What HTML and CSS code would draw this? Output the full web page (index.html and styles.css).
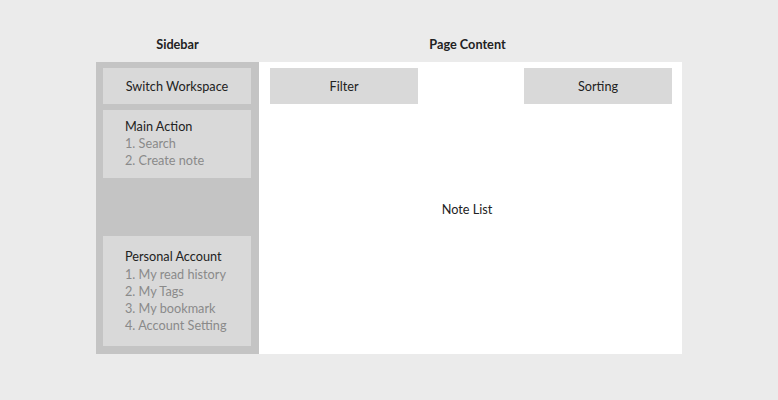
FILE: index.html
```html
<!DOCTYPE html>
<html lang="en">
<head>
  <meta charset="UTF-8">
  <meta name="viewport" content="width=device-width, initial-scale=1.0">
  <title>Note App Layout</title>
  <link rel="stylesheet" href="styles.css">
</head>
<body>
  <div class="layout">
    <div class="col-title">Sidebar</div>
    <div class="col-title col-title-page">Page Content</div>

    <aside class="sidebar">
      <div class="block block-center">Switch Workspace</div>
      <div class="block block-list block-main">
        <div class="block-title">Main Action</div>
        <div class="item">1. Search</div>
        <div class="item">2. Create note</div>
      </div>
      <div class="block block-list block-account">
        <div class="block-title">Personal Account</div>
        <div class="item">1. My read history</div>
        <div class="item">2. My Tags</div>
        <div class="item">3. My bookmark</div>
        <div class="item">4. Account Setting</div>
      </div>
    </aside>

    <main class="content">
      <div class="toolbar">
        <div class="block block-center">Filter</div>
        <div class="block block-center">Sorting</div>
      </div>
      <div class="note-list">Note List</div>
    </main>
  </div>
</body>
</html>
```

FILE: styles.css
```css
body {
  margin: 0;
  padding: 0;
  background-color: #ebebeb;
  font-family: Lato, "Open Sans", sans-serif;
  font-size: 12.7px;
  color: #222;
}

.layout {
  display: grid;
  grid-template-columns: 163px 423px;
  grid-template-rows: 26px 292px;
  margin: 36px 0 0 96px;
}

.col-title {
  text-align: center;
  font-weight: bold;
  line-height: 16px;
}

.col-title-page {
  padding-right: 6px;
}

.sidebar {
  background-color: #c4c4c4;
  display: flex;
  flex-direction: column;
  gap: 6px;
  padding: 6px 8px 8px 7px;
}

.block {
  background-color: #d9d9d9;
}

.block-center {
  height: 36px;
  display: flex;
  align-items: center;
  justify-content: center;
}

.block-list {
  display: flex;
  flex-direction: column;
  justify-content: center;
  padding: 0 0 0 22px;
  line-height: 17px;
  white-space: nowrap;
}

.block-main {
  height: 68px;
}

.block-main .block-title {
  margin-top: -2px;
}

.block-account {
  height: 110px;
  margin-top: auto;
}

.block-account .block-title {
  margin-bottom: 1px;
}

.item {
  color: #8a8a8a;
}

.content {
  background-color: #fff;
  display: flex;
  flex-direction: column;
  padding: 6px 10px 0 11px;
}

.toolbar {
  display: flex;
  justify-content: space-between;
}

.toolbar .block {
  width: 148px;
}

.note-list {
  flex: 1;
  display: flex;
  align-items: center;
  justify-content: center;
  padding-bottom: 40px;
  padding-right: 8px;
}
```
